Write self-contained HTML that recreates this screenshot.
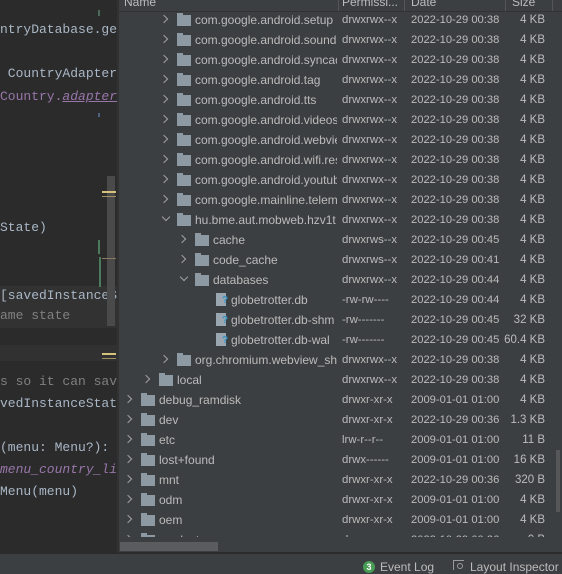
<!DOCTYPE html>
<html><head><meta charset="utf-8"><style>
*{margin:0;padding:0;box-sizing:border-box}
body{width:562px;height:573px;overflow:hidden;background:#3c3f41;position:relative;font-family:"Liberation Sans",sans-serif}
#ed{position:absolute;left:0;top:0;width:117px;height:553px;background:#2b2b2b;overflow:hidden}
.cl{position:absolute;left:0;white-space:pre;font-family:"Liberation Mono",monospace;font-size:13px;color:#a9b7c6;line-height:16px}
#panel{position:absolute;left:119px;top:0;width:443px;height:553px;background:#3c3f41;overflow:hidden}
.r{position:absolute;left:0;width:443px;height:20px;font-size:12px;color:#bbbbbb;line-height:20px;white-space:nowrap}
.r .n{position:absolute;top:0;overflow:hidden;height:20px}
.r .p{position:absolute;left:223px;font-size:11.4px}
.r .d{position:absolute;left:292px;font-size:11.2px}
.r .s{position:absolute;right:17px;font-size:11.5px}
.ch{position:absolute;top:6px;width:6px;height:6px;border-right:1.5px solid #a0a0a0;border-bottom:1.5px solid #a0a0a0}
.ch.c{transform:rotate(-45deg)}
.ch.o{transform:rotate(45deg);top:4px}
.f{position:absolute;top:5px;width:14px;height:11px;background:#8d9aa3}
.f:before{content:"";position:absolute;left:0;top:-2px;width:6px;height:2px;background:#8d9aa3}
.fi{position:absolute;top:3px;width:10px;height:13px;background:#9aa7b0}
.fi:after{content:"?";position:absolute;left:6px;top:2px;font-size:10px;font-weight:bold;color:#3592c4;line-height:12px}
</style></head><body>
<div id="ed">
<div style="position:absolute;left:0;top:286px;width:117px;height:42px;background:#323232"></div>
<div style="position:absolute;left:0;top:345px;width:117px;height:16px;background:#313131"></div>
<div class="cl" style="top:22px">ntryDatabase.ge</div>
<div class="cl" style="top:66px"> CountryAdapter</div>
<div class="cl" style="top:89px;color:#9876aa">Country.<span style="font-style:italic;text-decoration:underline">adapter</span></div>
<div class="cl" style="top:220px">State)</div>
<div class="cl" style="top:288px">[savedInstanceS</div>
<div class="cl" style="top:308px;color:#808080">ame state</div>
<div class="cl" style="top:374px;color:#808080">s so it can sav</div>
<div class="cl" style="top:396px">vedInstanceStat</div>
<div class="cl" style="top:440px">(menu: Menu?):</div>
<div class="cl" style="top:462px;color:#9876aa;font-style:italic">menu_country_li</div>
<div class="cl" style="top:484px">Menu(menu)</div>
<div style="position:absolute;left:107px;top:176px;width:8px;height:150px;background:#4a4a4a"></div>
<div style="position:absolute;left:102px;top:191px;width:14px;height:2px;background:#d6c27a"></div>
<div style="position:absolute;left:102px;top:196px;width:14px;height:1px;background:#a09060"></div>
<div style="position:absolute;left:102px;top:258px;width:14px;height:1px;background:#8a7a60"></div>
<div style="position:absolute;left:102px;top:353px;width:14px;height:2px;background:#d6c27a"></div>
<div style="position:absolute;left:102px;top:358px;width:14px;height:1px;background:#a09060"></div>
<div style="position:absolute;left:98px;top:240px;width:2px;height:14px;background:#4c7a5c"></div>
<div style="position:absolute;left:99px;top:257px;width:2px;height:30px;background:#4c7a5c"></div>
<div style="position:absolute;left:98px;top:10px;width:2px;height:6px;background:#4c6a5c"></div>
<div style="position:absolute;left:98px;top:113px;width:2px;height:4px;background:#4c6080"></div>
</div>
<div style="position:absolute;left:117px;top:0;width:2px;height:553px;background:#323232"></div>
<div id="panel">
<div style="position:absolute;left:0;top:0;width:443px;height:12px;background:#3c3f41;border-bottom:1px solid #323232;font-size:12px;color:#bbbbbb;line-height:9px;overflow:hidden">
<span style="position:absolute;left:5px;top:-2px">Name</span><span style="position:absolute;left:223px;top:-2px">Permissi...</span><span style="position:absolute;left:292px;top:-2px">Date</span><span style="position:absolute;left:393px;top:-2px">Size</span>
<div style="position:absolute;left:219px;top:0;width:1px;height:12px;background:#555"></div>
<div style="position:absolute;left:285px;top:0;width:1px;height:12px;background:#555"></div>
<div style="position:absolute;left:386px;top:0;width:1px;height:12px;background:#555"></div>
<div style="position:absolute;left:433px;top:0;width:1px;height:12px;background:#555"></div>
</div>
<div id="rows" style="position:absolute;left:0;top:10px;width:443px;height:527px;overflow:hidden"></div>
<div style="position:absolute;left:0;top:537px;width:443px;height:16px;background:#3c3f41;border-bottom:1px solid #2b2b2b"></div>
<div style="position:absolute;left:1px;top:542px;width:98px;height:9px;background:#5a5c5e"></div>
<div style="position:absolute;left:437px;top:450px;width:4px;height:62px;background:#555759"></div>
</div>
<div style="position:absolute;left:0;top:553px;width:562px;height:1px;background:#2b2b2b"></div>
<div style="position:absolute;left:363px;top:561px;width:12px;height:12px;border-radius:6px;background:#499c54;color:#fff;font-size:9px;line-height:12px;text-align:center;font-weight:bold">3</div>
<div style="position:absolute;left:380px;top:560px;font-size:12px;color:#bbbbbb;line-height:14px">Event Log</div>
<div style="position:absolute;left:453px;top:560px;width:11px;height:10px;border:1px solid #9a9a9a;border-right:none;border-bottom:none"></div>
<div style="position:absolute;left:457px;top:563px;width:6px;height:6px;border:1px solid #9a9a9a;border-radius:3px"></div>
<div style="position:absolute;left:470px;top:560px;font-size:12px;color:#bbbbbb;line-height:14px">Layout Inspector</div>
<script>
var D=[
[3,'c','f','com.google.android.setup','drwxrwx--x','2022-10-29 00:38','4 KB'],
[3,'c','f','com.google.android.sound','drwxrwx--x','2022-10-29 00:38','4 KB'],
[3,'c','f','com.google.android.syncadapters','drwxrwx--x','2022-10-29 00:38','4 KB'],
[3,'c','f','com.google.android.tag','drwxrwx--x','2022-10-29 00:38','4 KB'],
[3,'c','f','com.google.android.tts','drwxrwx--x','2022-10-29 00:38','4 KB'],
[3,'c','f','com.google.android.videos','drwxrwx--x','2022-10-29 00:38','4 KB'],
[3,'c','f','com.google.android.webview','drwxrwx--x','2022-10-29 00:38','4 KB'],
[3,'c','f','com.google.android.wifi.resources','drwxrwx--x','2022-10-29 00:38','4 KB'],
[3,'c','f','com.google.android.youtube','drwxrwx--x','2022-10-29 00:38','4 KB'],
[3,'c','f','com.google.mainline.telemetry','drwxrwx--x','2022-10-29 00:38','4 KB'],
[3,'o','f','hu.bme.aut.mobweb.hzv1t','drwxrwx--x','2022-10-29 00:38','4 KB'],
[4,'c','f','cache','drwxrws--x','2022-10-29 00:45','4 KB'],
[4,'c','f','code_cache','drwxrws--x','2022-10-29 00:41','4 KB'],
[4,'o','f','databases','drwxrwx--x','2022-10-29 00:44','4 KB'],
[5,'','i','globetrotter.db','-rw-rw----','2022-10-29 00:44','4 KB'],
[5,'','i','globetrotter.db-shm','-rw-------','2022-10-29 00:45','32 KB'],
[5,'','i','globetrotter.db-wal','-rw-------','2022-10-29 00:45','60.4 KB'],
[3,'c','f','org.chromium.webview_shell','drwxrwx--x','2022-10-29 00:38','4 KB'],
[2,'c','f','local','drwxrwx--x','2022-10-29 00:38','4 KB'],
[1,'c','f','debug_ramdisk','drwxr-xr-x','2009-01-01 01:00','4 KB'],
[1,'c','f','dev','drwxr-xr-x','2022-10-29 00:36','1.3 KB'],
[1,'c','f','etc','lrw-r--r--','2009-01-01 01:00','11 B'],
[1,'c','f','lost+found','drwx------','2009-01-01 01:00','16 KB'],
[1,'c','f','mnt','drwxr-xr-x','2022-10-29 00:36','320 B'],
[1,'c','f','odm','drwxr-xr-x','2009-01-01 01:00','4 KB'],
[1,'c','f','oem','drwxr-xr-x','2009-01-01 01:00','4 KB'],
[1,'c','f','product','drwxr-xr-x','2022-10-29 00:36','0 B']];
var h='';
D.forEach(function(r,i){
 var x=8+(r[0]-1)*18;
 h+='<div class="r" style="top:'+(i*20)+'px">';
 if(r[1])h+='<div class="ch '+r[1]+'" style="left:'+(r[1]=='c'?x-2:x)+'px"></div>';
 if(r[2]=='f')h+='<div class="f" style="left:'+(x+14)+'px"></div><div class="n" style="left:'+(x+32)+'px;width:'+(218-x-32)+'px">'+r[3]+'</div>';
 else h+='<div class="fi" style="left:'+(x+17)+'px"></div><div class="n" style="left:'+(x+32)+'px;width:'+(218-x-32)+'px">'+r[3]+'</div>';
 h+='<span class="p">'+r[4]+'</span><span class="d">'+r[5]+'</span><span class="s">'+r[6]+'</span></div>';
});
document.getElementById('rows').innerHTML=h;
</script>
</body></html>
